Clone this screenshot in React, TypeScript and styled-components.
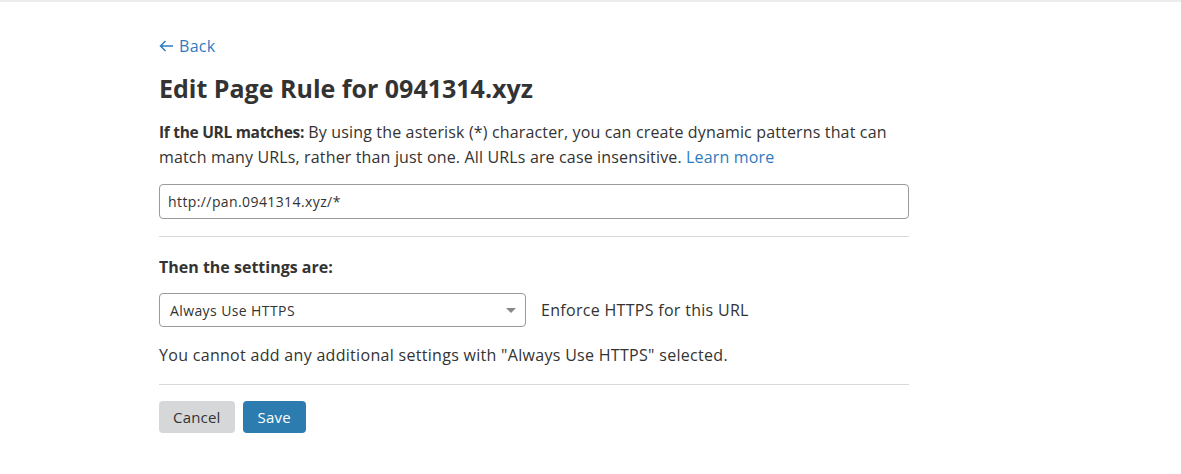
import React from "react";
import styled, { createGlobalStyle } from "styled-components";

const Global = createGlobalStyle`
  html, body { margin: 0; padding: 0; background: #fff; }
  body { font-family: "Open Sans", "Noto Sans", sans-serif; color: #333; }
`;

const TopBar = styled.div`
  height: 1px;
  border-top: 2px solid #ececec;
`;

const Main = styled.main`
  width: 750px;
  padding: 32px 0 0 159px;
`;

const BackLink = styled.a`
  display: inline-flex;
  align-items: center;
  gap: 5px;
  color: #2f7bbf;
  font-size: 16px;
  letter-spacing: 0.3px;
  text-decoration: none;
  line-height: 22px;
`;

const ArrowIcon = styled.svg`
  width: 15px;
  height: 12px;
  flex: none;
`;

const Title = styled.h1`
  margin: 14px 0 15px;
  font-size: 25px;
  font-weight: 700;
  line-height: 34px;
  color: #333;
`;

const Para = styled.p`
  margin: 0 0 14px;
  font-size: 16px;
  line-height: 25px;
  letter-spacing: 0.15px;
  b {
    font-size: 15.5px;
    letter-spacing: -0.3px;
  }
`;

const Link = styled.a`
  color: #2f7bbf;
  text-decoration: none;
`;

const TextInput = styled.input`
  box-sizing: border-box;
  display: block;
  width: 750px;
  height: 35px;
  padding: 0 8px;
  border: 1px solid #9a9a9a;
  border-radius: 4px;
  font-family: inherit;
  font-size: 14px;
  letter-spacing: 0.4px;
  color: #333;
  outline: none;
`;

const Divider = styled.hr`
  margin: 17px 0 0;
  border: 0;
  border-top: 1px solid #d9d9d9;
`;

const SectionLabel = styled.h2`
  margin: 18px 0 14px;
  font-size: 16px;
  font-weight: 700;
  line-height: 24px;
`;

const SettingRow = styled.div`
  display: flex;
  align-items: center;
  gap: 15px;
`;

const SelectBox = styled.div`
  box-sizing: border-box;
  width: 367px;
  height: 34px;
  display: flex;
  align-items: center;
  justify-content: space-between;
  padding: 0 10px;
  border: 1px solid #9a9a9a;
  border-radius: 4px;
  font-size: 14px;
  letter-spacing: 0.4px;
`;

const Caret = styled.span`
  width: 0;
  height: 0;
  border-left: 5px solid transparent;
  border-right: 5px solid transparent;
  border-top: 5px solid #888;
  margin-right: -1px;
`;

const Hint = styled.span`
  font-size: 16px;
  letter-spacing: 0.3px;
`;

const Note = styled.p`
  margin: 16px 0 0;
  font-size: 16px;
  line-height: 24px;
  letter-spacing: 0.3px;
`;

const Actions = styled.div`
  display: flex;
  gap: 8px;
  margin-top: 16px;
`;

const Button = styled.button<{ $primary?: boolean }>`
  height: 32px;
  padding: 0 ${(p) => (p.$primary ? "15px" : "14px")};
  border: 0;
  border-radius: 4px;
  font-family: inherit;
  font-size: 15px;
  letter-spacing: 0.2px;
  background: ${(p) => (p.$primary ? "#2c7cb0" : "#d5d7d8")};
  color: ${(p) => (p.$primary ? "#fff" : "#333")};
`;

export default function App() {
  return (
    <>
      <Global />
      <TopBar />
      <Main>
        <BackLink href="#">
          <ArrowIcon viewBox="0 0 15 12" fill="none" stroke="#2f7bbf" strokeWidth="1.5">
            <path d="M14 6H1.5M6.5 1L1.5 6l5 5" />
          </ArrowIcon>
          Back
        </BackLink>
        <Title>Edit Page Rule for 0941314.xyz</Title>
        <Para>
          <b>If the URL matches:</b> By using the asterisk (*) character, you can create dynamic
          patterns that can match many URLs, rather than just one. All URLs are case insensitive.{" "}
          <Link href="#">Learn more</Link>
        </Para>
        <TextInput defaultValue="http://pan.0941314.xyz/*" />
        <Divider />
        <SectionLabel>Then the settings are:</SectionLabel>
        <SettingRow>
          <SelectBox>
            <span>Always Use HTTPS</span>
            <Caret />
          </SelectBox>
          <Hint>Enforce HTTPS for this URL</Hint>
        </SettingRow>
        <Note>You cannot add any additional settings with "Always Use HTTPS" selected.</Note>
        <Divider />
        <Actions>
          <Button>Cancel</Button>
          <Button $primary>Save</Button>
        </Actions>
      </Main>
    </>
  );
}
